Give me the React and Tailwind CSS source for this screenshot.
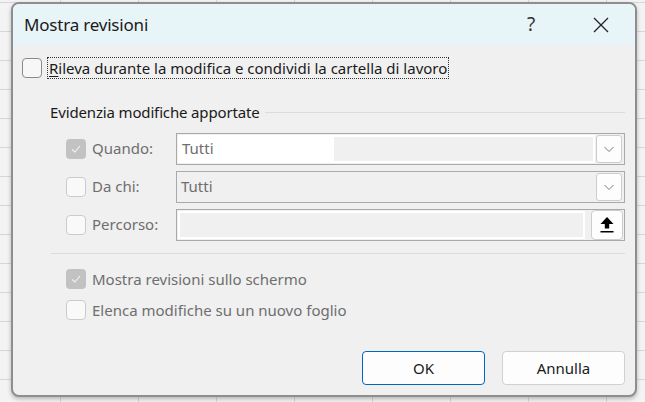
import React from 'react';

const font = { fontFamily: '"Segoe UI", "Noto Sans", sans-serif' };

function Check({ checked, disabled }) {
  if (checked) {
    return (
      <span className="w-[20px] h-[20px] rounded-[4px] bg-[#c2c2c2] flex items-center justify-center shrink-0">
        <svg width="12" height="12" viewBox="0 0 12 12" fill="none" stroke="#f4f4f4" strokeWidth="1.1">
          <path d="M2 6.3 L4.8 9 L10 3" />
        </svg>
      </span>
    );
  }
  return (
    <span
      className={
        disabled
          ? 'w-[20px] h-[20px] rounded-[4px] border border-[#cbcbcb] bg-[#f9f9f9] shrink-0'
          : 'w-[20px] h-[20px] rounded-[4px] border border-[#8a8a8a] bg-[#f7f7f7] shrink-0'
      }
    />
  );
}

function Chevron() {
  return (
    <span className="w-[26px] h-[28px] mr-[2px] rounded-[3px] border border-[#cdcdcd] bg-[#fdfdfd] flex items-center justify-center">
      <svg width="12" height="8" viewBox="0 0 12 8" fill="none" stroke="#7a7a7a" strokeWidth="1">
        <path d="M1.5 2 L6 6.5 L10.5 2" />
      </svg>
    </span>
  );
}

function Row({ label, checked, children }) {
  return (
    <div className="flex items-center h-[32px]">
      <div className="w-[110px] flex items-center gap-[6px] pl-[53px] box-content">
        <Check checked={checked} disabled />
        <span className="text-[#6e6e6e] text-[15px]">{label}</span>
      </div>
      {children}
    </div>
  );
}

export default function App() {
  return (
    <div
      className="w-[645px] h-[402px] overflow-hidden bg-[#f3f3f3] bg-[linear-gradient(to_bottom,#d6d6d6_1px,transparent_1px),linear-gradient(to_right,#d6d6d6_1px,transparent_1px)] bg-[size:78px_29px] bg-[position:60px_2px] pl-[11px] pt-[2px]"
      style={font}
    >
      <div className="w-[626px] h-[395px] rounded-[8px] border-[2px] border-[#8e8e8e] bg-[#f0f0f0] overflow-hidden flex flex-col shadow-[0_2px_4px_rgba(0,0,0,0.25)]">
        <div className="h-[41px] bg-[#e8f5f8] flex items-center pl-[11px] shrink-0">
          <span className="text-[17px] text-[#1b1b1b] flex-1 tracking-[-0.2px]">Mostra revisioni</span>
          <span className="text-[19px] text-[#333] w-[20px] text-center mr-[52px]">?</span>
          <svg width="16" height="16" viewBox="0 0 16 16" className="mr-[26px]" fill="none" stroke="#222" strokeWidth="1.3">
            <path d="M1 1 L15 15 M15 1 L1 15" />
          </svg>
        </div>

        <div className="flex items-center gap-[5px] pl-[9px] pt-[12px]">
          <Check />
          <span className="text-[15px] text-[#1a1a1a] border border-dotted border-[#333] px-[1px] leading-[20px]">
            <span className="underline underline-offset-2">R</span>ileva durante la modifica e condividi la cartella di lavoro
          </span>
        </div>

        <div className="flex items-center pl-[37px] pr-[10px] mt-[22px]">
          <span className="text-[15px] text-[#1a1a1a] tracking-[-0.15px]">Evidenzia modifiche apportate</span>
          <div className="flex-1 h-px bg-[#dcdcdc] ml-[5px]" />
        </div>

        <div className="flex flex-col gap-[6px] mt-[9px] pr-[10px]">
          <Row label="Quando:" checked>
            <div className="flex-1 h-[32px] border border-[#a9a9a9] bg-[#f0f0f0] flex items-center">
              <div className="flex-1 self-stretch m-[1px] border-[2px] border-white bg-[#f0f0f0] flex items-center">
                <span className="bg-white self-stretch flex items-center pl-[2px] pr-[120px] text-[15px] text-[#6e6e6e]">Tutti</span>
              </div>
              <Chevron />
            </div>
          </Row>
          <Row label="Da chi:">
            <div className="flex-1 h-[32px] border border-[#a9a9a9] bg-[#f0f0f0] flex items-center">
              <span className="flex-1 pl-[4px] text-[15px] text-[#6e6e6e]">Tutti</span>
              <Chevron />
            </div>
          </Row>
          <Row label="Percorso:">
            <div className="flex-1 h-[32px] border border-[#a9a9a9] bg-[#f0f0f0] flex items-center">
              <div className="flex-1 self-stretch mt-[1px] mb-[1px] ml-[1px] mr-[6px] border-[2px] border-white bg-[#f0f0f0]" />
              <span className="w-[32px] h-[30px] mr-[1px] rounded-[4px] border border-[#cdcdcd] bg-[#fdfdfd] flex items-center justify-center">
                <svg width="16" height="18" viewBox="0 0 16 18" fill="#000">
                  <path d="M8 1 L14.5 8 L10.2 8 L10.2 12.5 L5.8 12.5 L5.8 8 L1.5 8 Z" />
                  <rect x="1.5" y="15" width="13" height="1.5" />
                </svg>
              </span>
            </div>
          </Row>
        </div>

        <div className="h-px bg-[#dcdcdc] ml-[38px] mr-[10px] mt-[12px]" />

        <div className="flex flex-col gap-[9px] mt-[14px] pl-[53px]">
          <div className="flex items-center gap-[6px]">
            <Check checked disabled />
            <span className="text-[15px] text-[#6e6e6e]">Mostra revisioni sullo schermo</span>
          </div>
          <div className="flex items-center gap-[6px]">
            <Check disabled />
            <span className="text-[15px] text-[#6e6e6e]">Elenca modifiche su un nuovo foglio</span>
          </div>
        </div>

        <div className="flex justify-end gap-[17px] pr-[10px] mt-auto mb-[10px]">
          <button className="w-[123px] h-[34px] rounded-[4px] border border-[#0067c0] bg-[#fdfdfd] text-[15px] text-[#1a1a1a]">OK</button>
          <button className="w-[123px] h-[34px] rounded-[4px] border border-[#d1d1d1] bg-[#fdfdfd] text-[15px] text-[#1a1a1a]">Annulla</button>
        </div>
      </div>
    </div>
  );
}
